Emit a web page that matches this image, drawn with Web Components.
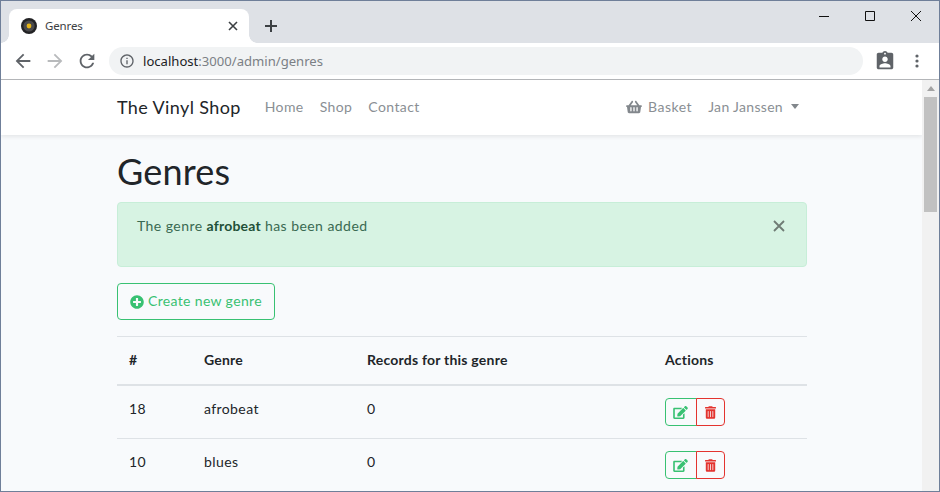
<!DOCTYPE html>
<html lang="en"><head><meta charset="utf-8"><title>Genres</title>
<style>
html,body{margin:0;height:100%;overflow:hidden;background:#fff}
body{font-family:"Lato","Noto Sans",sans-serif}
</style></head>
<body>
<browser-window>
  <tab-strip slot="chrome" title-text="Genres"></tab-strip>
  <browser-toolbar slot="chrome" host-text="localhost" path-text=":3000/admin/genres"></browser-toolbar>
  <site-nav></site-nav>
  <page-main>
    <h-title>Genres</h-title>
    <flash-alert>The genre <b>afrobeat</b> has been added</flash-alert>
    <create-button>Create new genre</create-button>
    <genre-table>
      <genre-row head></genre-row>
      <genre-row id-text="18" name="afrobeat" count="0"></genre-row>
      <genre-row id-text="10" name="blues" count="0"></genre-row>
    </genre-table>
  </page-main>
</browser-window>
<script>
const P={
 basket:'M576 216v16c0 13.255-10.745 24-24 24h-8l-26.113 182.788C514.509 462.435 494.257 480 470.37 480H105.63c-23.887 0-44.139-17.565-47.518-41.212L32 256h-8c-13.255 0-24-10.745-24-24v-16c0-13.255 10.745-24 24-24h67.341l106.78-146.821c10.395-14.292 30.407-17.453 44.701-7.058 14.293 10.395 17.453 30.408 7.058 44.701L170.477 192h235.046L326.12 82.821c-10.395-14.292-7.234-34.306 7.059-44.701 14.291-10.395 34.306-7.235 44.701 7.058L484.659 192H552c13.255 0 24 10.745 24 24zM312 392V280c0-13.255-10.745-24-24-24s-24 10.745-24 24v112c0 13.255 10.745 24 24 24s24-10.745 24-24zm112 0V280c0-13.255-10.745-24-24-24s-24 10.745-24 24v112c0 13.255 10.745 24 24 24s24-10.745 24-24zm-224 0V280c0-13.255-10.745-24-24-24s-24 10.745-24 24v112c0 13.255 10.745 24 24 24s24-10.745 24-24z',
 plus:'M256 8C119 8 8 119 8 256s111 248 248 248 248-111 248-248S393 8 256 8zm144 276c0 6.6-5.4 12-12 12h-92v92c0 6.6-5.4 12-12 12h-56c-6.6 0-12-5.4-12-12v-92h-92c-6.6 0-12-5.4-12-12v-56c0-6.6 5.4-12 12-12h92v-92c0-6.6 5.4-12 12-12h56c6.6 0 12 5.4 12 12v92h92c6.6 0 12 5.4 12 12v56z',
 edit:'M402.6 83.2l90.2 90.2c3.8 3.8 3.8 10 0 13.8L274.4 405.6l-92.8 10.3c-12.4 1.4-22.9-9.1-21.5-21.5l10.3-92.8L388.8 83.2c3.8-3.8 10-3.8 13.8 0zm162-22.9l-48.8-48.8c-15.2-15.2-39.9-15.2-55.2 0l-35.4 35.4c-3.8 3.8-3.8 10 0 13.8l90.2 90.2c3.8 3.8 10 3.8 13.8 0l35.4-35.4c15.2-15.3 15.2-40 0-55.2zM384 346.2V448H64V128h229.8c3.2 0 6.2-1.3 8.5-3.5l40-40c7.6-7.6 2.2-20.5-8.5-20.5H48C21.5 64 0 85.5 0 112v352c0 26.5 21.5 48 48 48h352c26.5 0 48-21.5 48-48V306.2c0-10.7-12.9-16-20.5-8.5l-40 40c-2.2 2.3-3.5 5.3-3.5 8.5z',
 trash:'M32 464a48 48 0 0 0 48 48h288a48 48 0 0 0 48-48V128H32zm272-256a16 16 0 0 1 32 0v224a16 16 0 0 1-32 0zm-96 0a16 16 0 0 1 32 0v224a16 16 0 0 1-32 0zm-96 0a16 16 0 0 1 32 0v224a16 16 0 0 1-32 0zM432 32H312l-9.4-18.7A24 24 0 0 0 281.1 0H166.8a23.72 23.72 0 0 0-21.4 13.3L136 32H16A16 16 0 0 0 0 48v32a16 16 0 0 0 16 16h416a16 16 0 0 0 16-16V48a16 16 0 0 0-16-16z',
 back:'M20 11H7.83l5.59-5.59L12 4l-8 8 8 8 1.41-1.41L7.83 13H20v-2z',
 fwd:'M4 11h12.17l-5.59-5.59L12 4l8 8-8 8-1.41-1.41L16.17 13H4v-2z',
 reload:'M17.65 6.35C16.2 4.9 14.21 4 12 4c-4.42 0-7.99 3.58-7.99 8s3.57 8 7.99 8c3.73 0 6.84-2.55 7.73-6h-2.08c-.82 2.33-3.04 4-5.65 4-3.31 0-6-2.69-6-6s2.69-6 6-6c1.66 0 3.14.69 4.22 1.78L13 11h7V4l-2.35 2.35z',
 info:'M11 7h2v2h-2zm0 4h2v6h-2zm1-9C6.48 2 2 6.48 2 12s4.48 10 10 10 10-4.48 10-10S17.52 2 12 2zm0 18c-4.41 0-8-3.59-8-8s3.59-8 8-8 8 3.59 8 8-3.59 8-8 8z',
 clip:'M19 3h-4.18C14.4 1.84 13.3 1 12 1c-1.3 0-2.4.84-2.82 2H5c-1.1 0-2 .9-2 2v14c0 1.1.9 2 2 2h14c1.1 0 2-.9 2-2V5c0-1.1-.9-2-2-2zm-7 0c.55 0 1 .45 1 1s-.45 1-1 1-1-.45-1-1 .45-1 1-1zm0 4c1.66 0 3 1.34 3 3s-1.34 3-3 3-3-1.34-3-3 1.34-3 3-3zm6 12H6v-1.4c0-2 4-3.1 6-3.1s6 1.1 6 3.1V19z'
};
const svg=(d,vb,w,h,fill)=>`<svg viewBox="${vb}" width="${w}" height="${h}" fill="${fill}" style="display:block;flex:none"><path d="${d}"/></svg>`;
const def=(name,html)=>customElements.define(name,class extends HTMLElement{
  connectedCallback(){ if(this.shadowRoot)return; const r=this.attachShadow({mode:'open'}); r.innerHTML=typeof html==='function'?html(this):html; }
});

def('browser-window',`<style>
:host{display:flex;box-sizing:border-box;flex-direction:column;width:940px;height:492px;border:1px solid #6f7f99;overflow:hidden;background:#fff}
.view{flex:1;min-height:0;display:flex;overflow:hidden}
.page{flex:1;min-width:0;background:#f8fafc;overflow:hidden}
.sb{width:17px;flex:none;background:#f1f1f1;display:flex;flex-direction:column;align-items:center}
.up{height:17px;flex:none;display:flex;align-items:center;justify-content:center}
.up i{display:block;width:0;height:0;border-left:4.5px solid transparent;border-right:4.5px solid transparent;border-bottom:5px solid #a3a3a3}
.th{width:13px;height:115px;background:#c1c1c1}
</style><slot name="chrome"></slot><div class="view"><div class="page"><slot></slot></div><div class="sb"><div class="up"><i></i></div><div class="th"></div></div></div>`);

def('tab-strip',h=>`<style>
:host{display:flex;height:42px;background:#dee1e6;align-items:flex-end;font-family:"Noto Sans","Open Sans",sans-serif}
.tab{margin-left:8px;width:240px;height:34px;box-sizing:border-box;background:#fff;border-radius:8px 8px 0 0;display:flex;align-items:center;padding:0 9px 1px 12px;color:#3c4043;font-size:11.5px;letter-spacing:-.15px;position:relative}
.tab::before,.tab::after{content:"";position:absolute;bottom:0;width:8px;height:8px;background:radial-gradient(circle at var(--c) 0,#dee1e6 7.5px,#fff 8px)}
.tab::before{left:-8px;--c:0}.tab::after{right:-8px;--c:100%}
.fav{width:16px;height:16px;flex:none;margin-right:8px}
.t{flex:1}
.x{width:14px;height:14px;flex:none}
.plus{margin:0 0 10px 15px;width:14px;height:14px;flex:none}
.ctl{margin-left:auto;display:flex;align-self:flex-start}
.ctl div{width:46px;height:29px;display:flex;align-items:center;justify-content:center}
</style>
<div class="tab">
<svg class="fav" viewBox="0 0 16 16"><circle cx="8" cy="8" r="8" fill="#222224"/><circle cx="8" cy="8" r="5.6" fill="#4a4a4c"/><circle cx="8" cy="8" r="2.4" fill="#e6b417"/></svg>
<span class="t">${h.getAttribute('title-text')}</span>
<svg class="x" viewBox="0 0 14 14"><path d="M3 3l8 8M11 3l-8 8" stroke="#3c4043" stroke-width="1.6"/></svg>
</div>
<svg class="plus" viewBox="0 0 14 14"><path d="M7 1v12M1 7h12" stroke="#3c4043" stroke-width="2"/></svg>
<div class="ctl">
<div><svg width="10" height="10" viewBox="0 0 10 10"><path d="M0 5.5h10" stroke="#111" stroke-width="1"/></svg></div>
<div><svg width="10" height="10" viewBox="0 0 10 10"><path d="M.5.5h9v9h-9z" fill="none" stroke="#111"/></svg></div>
<div><svg width="10" height="10" viewBox="0 0 10 10"><path d="M0 0l10 10M10 0L0 10" stroke="#111"/></svg></div>
</div>`);

def('browser-toolbar',h=>`<style>
:host{display:flex;height:37px;box-sizing:border-box;background:#fff;border-bottom:1px solid #b3b5b8;align-items:center;font-family:"Noto Sans","Open Sans",sans-serif}
.b{width:32px;display:flex;justify-content:center;align-items:center;flex:none}
.bs{margin-left:6px;display:flex;align-items:center}
.om{margin-left:6px;width:754px;height:28px;flex:none;background:#f1f3f4;border-radius:14px;display:flex;align-items:center;padding-left:10px;box-sizing:border-box;font-size:13.1px;color:#7b8085}
.om svg{margin-right:8px}
.om span{color:#202124}
.r{margin-left:6px;display:flex;align-items:center}
</style><div class="bs"><div class="b">${svg(P.back,'0 0 24 24',22,22,'#5f6368')}</div><div class="b">${svg(P.fwd,'0 0 24 24',22,22,'#b8babc')}</div><div class="b">${svg(P.reload,'0 0 24 24',22,22,'#5f6368')}</div></div>
<div class="om">${svg(P.info,'0 0 24 24',16,16,'#5f6368')}<div><span>${h.getAttribute('host-text')}</span>${h.getAttribute('path-text')}</div></div>
<div class="r"><div class="b">${svg(P.clip,'0 0 24 24',22,22,'#5f6368')}</div><div class="b"><svg width="4" height="14" viewBox="0 0 4 14" fill="#5f6368"><circle cx="2" cy="2" r="1.6"/><circle cx="2" cy="7" r="1.6"/><circle cx="2" cy="12" r="1.6"/></svg></div></div>`);

def('site-nav',`<style>
:host{display:flex;height:55px;box-sizing:border-box;padding-bottom:2px;background:#fff;box-shadow:0 2px 4px rgba(0,0,0,.08);align-items:center;padding-left:116px;padding-right:123px;position:relative;font-size:14px;color:#8a8f94;letter-spacing:.4px}
.brand{font-size:18px;color:#212529;margin-right:24px;letter-spacing:.38px}
.links{display:flex;gap:16px}
.right{margin-left:auto;display:flex;align-items:center}
.bk{display:flex;align-items:center;gap:6px;margin-right:16px;letter-spacing:.5px}
.jan{letter-spacing:.32px}
.caret{width:0;height:0;border-left:4.5px solid transparent;border-right:4.5px solid transparent;border-top:5px solid #82878c;margin-left:8px}
</style><span class="brand">The Vinyl Shop</span><div class="links"><span>Home</span><span>Shop</span><span>Contact</span></div>
<div class="right"><span class="bk">${svg(P.basket,'0 0 576 512',16,14,'#82878c')}Basket</span><span class="jan">Jan Janssen</span><i class="caret"></i></div>`);

def('page-main',`<style>
:host{display:block;width:690px;margin-left:116px;padding-top:16px;color:#212529;font-size:14px}
</style><slot></slot>`);

def('h-title',`<style>:host{display:block;font-size:36px;line-height:40px;margin-bottom:11px;color:#212529;letter-spacing:.2px}</style><slot></slot>`);

def('flash-alert',`<style>
:host{display:flex;justify-content:space-between;box-sizing:border-box;height:65px;background:#d7f3e3;border:1px solid #c7eed8;border-radius:4px;padding:12px 21px 0 19px;color:#3a6a52;font-size:14px;line-height:21px;letter-spacing:.45px;margin-bottom:16px}
svg{margin-top:5px}
::slotted(b){letter-spacing:.2px;color:#1f5038}
</style><div><slot></slot></div><svg width="12" height="12" viewBox="0 0 12 12"><path d="M1 1l10 10M11 1L1 11" stroke="#6f7b74" stroke-width="1.8"/></svg>`);

def('create-button',`<style>
:host{display:flex;width:158px;height:37px;box-sizing:border-box;border:1px solid #38c172;border-radius:4px;color:#38c172;align-items:center;padding-left:12px;gap:4px;font-size:14px;letter-spacing:.35px;margin-bottom:16px}
span{padding-bottom:2px}
</style>${svg(P.plus,'0 0 512 512',14,14,'#38c172')}<span><slot></slot></span>`);

def('genre-table',`<style>:host{display:block;border-top:1px solid #dee2e6}</style><slot></slot>`);

def('genre-row',h=>{
 const head=h.hasAttribute('head');
 const c=head?['#','Genre','Records for this genre','Actions']:[h.getAttribute('id-text'),h.getAttribute('name'),h.getAttribute('count')];
 return `<style>
:host{display:grid;grid-template-columns:75px 163px 298px 154px;align-items:center;height:${head?'49px':'53px'};box-sizing:border-box;border-bottom:${head?'2px':'1px'} solid #dee2e6;font-size:14px;color:#212529;letter-spacing:.4px;${head?'font-weight:700;letter-spacing:.22px;':''}}
.c{padding-left:12px;padding-bottom:${head?'2px':'8px'}}
.a{padding-left:12px}
.g{display:flex}
.btn{width:32px;height:28px;box-sizing:border-box;border:1px solid;display:flex;align-items:center;justify-content:center}
.e{border-color:#38c172;border-radius:4px 0 0 4px;padding-right:2px}
.d{border-color:#e3342f;border-radius:0 4px 4px 0;margin-left:-1px;width:29px}
</style>${c.map(t=>`<div class="c">${t}</div>`).join('')}${head?'':`<div class="a"><div class="g"><div class="btn e">${svg(P.edit,'0 0 576 512',15,13,'#38c172')}</div><div class="btn d">${svg(P.trash,'0 0 448 512',11,13,'#e3342f')}</div></div></div>`}`;
});
</script>
</body></html>
